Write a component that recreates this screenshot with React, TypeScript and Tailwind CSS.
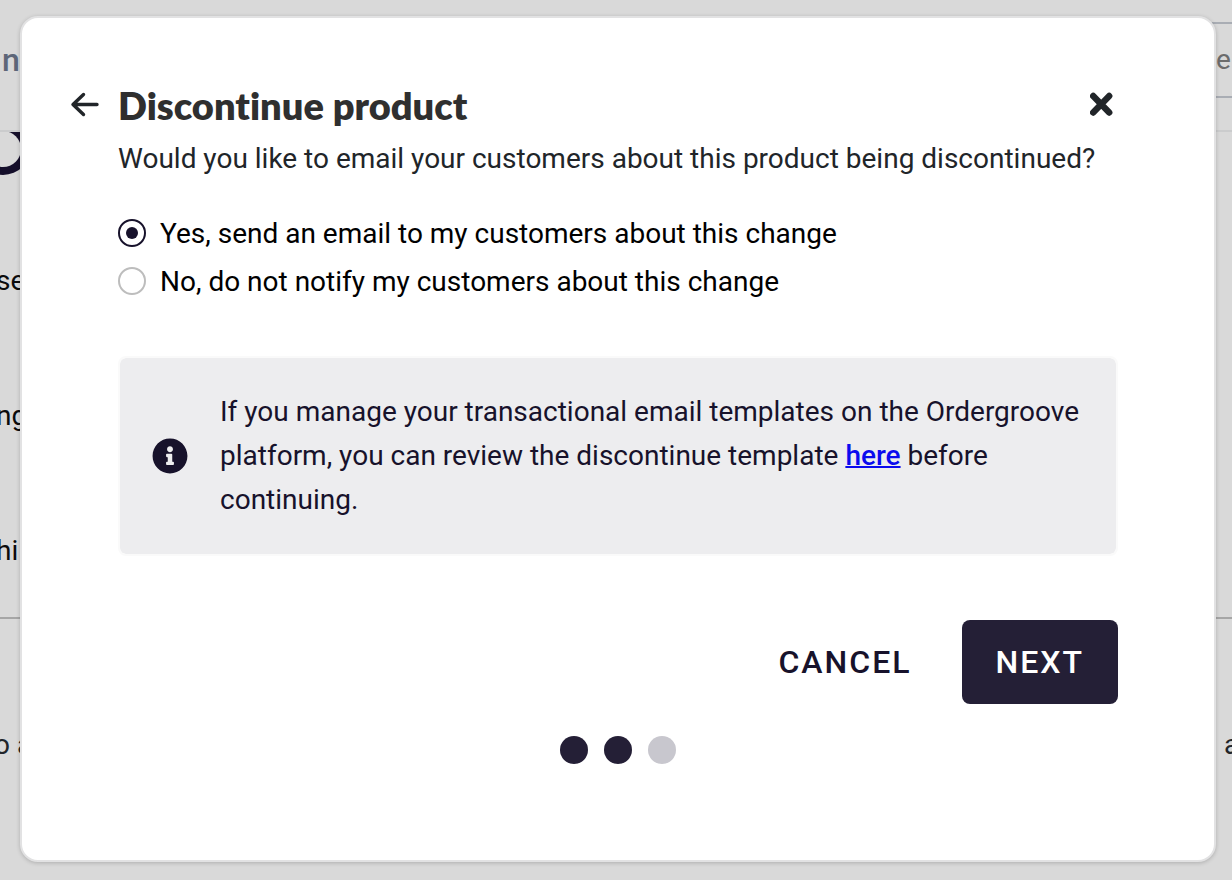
import React, { useState } from 'react';
import { FaInfoCircle } from 'react-icons/fa';

const choices = [
  { value: 'yes', label: 'Yes, send an email to my customers about this change' },
  { value: 'no', label: 'No, do not notify my customers about this change' },
];

const steps = [
  { name: 'Product', done: true },
  { name: 'Email', done: true },
  { name: 'Confirm', done: false },
];

const PageBehind = () => {
  return (
    <div className="absolute inset-0 overflow-hidden text-[28px] leading-9 text-[#0b0b0c]" aria-hidden="true">
      {/* Top bar */}
      <div className="flex h-[132px] items-start justify-between border-b-2 border-[#cbcccd] pt-[22px]">
        <span className="pt-5 pl-0.5 text-[32px] font-medium text-[#5d6678]">n</span>
        <div className="flex h-[76px] w-5 items-center border-y-2 border-[#a9adb4] text-[#6c6c6c]">
          <span className="pl-1">e</span>
        </div>
      </div>
      <svg className="block h-11 w-8" viewBox="0 0 32 44">
        <circle cx="3" cy="15" r="28" fill="#150f2b" />
        <circle cx="3" cy="17" r="18" fill="#d9d9d9" />
      </svg>

      {/* Left hand labels */}
      <div className="h-[443px] border-b-2 border-[#a6a6a6] pt-[87px]">
        <div className="-ml-1 flex flex-col gap-[99px]">
          <span>se</span>
          <span>ng</span>
          <span>hi</span>
        </div>
      </div>
      <div className="-ml-1.5 flex justify-between pt-[108px] text-[#212529]">
        <span>o a</span>
        <span className="w-2">a</span>
      </div>
    </div>
  );
};

const App = () => {
  const [choice, setChoice] = useState('yes');

  return (
    <div className="relative min-h-screen bg-[#d9d9d9] pt-4 pr-4 pb-[18px] pl-5 font-['Roboto',sans-serif]">
      <PageBehind />

      <div
        role="dialog"
        aria-labelledby="dialog-title"
        className="relative rounded-[18px] border-2 border-[#e2e2e3] bg-white px-12 pt-16 pb-24 shadow-[0_1px_4px_rgba(0,0,0,0.2)]"
      >
        {/* Header */}
        <div className="flex items-start">
          <button type="button" aria-label="Back" className="flex h-11 w-12 items-center">
            <svg className="h-7 w-8" viewBox="0 0 32 28" fill="none" stroke="#212529" strokeWidth="3.4" strokeLinecap="round" strokeLinejoin="round">
              <path d="M27 14.5H3M13.5 4.5 3 14.5 13.5 24.5" />
            </svg>
          </button>
          <h1 id="dialog-title" className="flex-1 font-['Lato',sans-serif] text-[38px] leading-[46px] font-extrabold text-[#2f2f2f] [font-variant-ligatures:none]">
            Discontinue product
          </h1>
          <button type="button" aria-label="Close" className="mr-11 flex h-11 w-10 items-center justify-center">
            <svg className="h-6 w-6" viewBox="0 0 24 24" fill="none" stroke="#212529" strokeWidth="6.4" strokeLinecap="round">
              <path d="M3.2 4 19.2 20.5M19.2 4 3.2 20.5" />
            </svg>
          </button>
        </div>

        <div className="px-12 text-[28px] leading-11">
          <p className="pt-[9px] text-[#212529]">
            Would you like to email your customers about this product being discontinued?
          </p>

          <fieldset className="mt-7">
            {choices.map((item) => (
              <label key={item.value} className="flex h-12 items-center gap-3.5 text-black">
                <input
                  type="radio"
                  name="notify"
                  value={item.value}
                  checked={choice === item.value}
                  onChange={() => setChoice(item.value)}
                  className="flex h-7 w-7 shrink-0 appearance-none items-center justify-center rounded-full border-2 border-[#bdbdbd] before:h-3 before:w-3 before:rounded-full checked:border-[#17122b] checked:before:bg-[#17122b]"
                />
                <span className="pt-0.5">{item.label}</span>
              </label>
            ))}
          </fieldset>

          <div className="mt-[51px] flex items-center gap-8 rounded-lg border-2 border-[#fafafa] bg-[#ededef] bg-clip-padding p-8 text-[#17122b]">
            <FaInfoCircle className="h-9 w-9 shrink-0" />
            <p>
              If you manage your transactional email templates on the Ordergroove platform, you can
              review the discontinue template{' '}
              <a href="#template" className="font-medium text-[#0b0bee] underline decoration-2">
                here
              </a>{' '}
              before continuing.
            </p>
          </div>

          <div className="mt-16 flex justify-end gap-4 text-[32px] font-medium tracking-[2px]">
            <button type="button" className="h-[84px] px-[34px] text-[#17122b]">
              CANCEL
            </button>
            <button type="button" className="h-[84px] rounded-lg bg-[#241f36] px-[34px] text-white">
              NEXT
            </button>
          </div>

          {/* Step dots */}
          <ol className="mt-8 flex justify-center gap-4">
            {steps.map((step) => (
              <li
                key={step.name}
                aria-label={step.name}
                className={`h-7 w-7 rounded-full ${step.done ? 'bg-[#241f36]' : 'bg-[#c8c7ce]'}`}
              />
            ))}
          </ol>
        </div>
      </div>
    </div>
  );
};

export default App;
